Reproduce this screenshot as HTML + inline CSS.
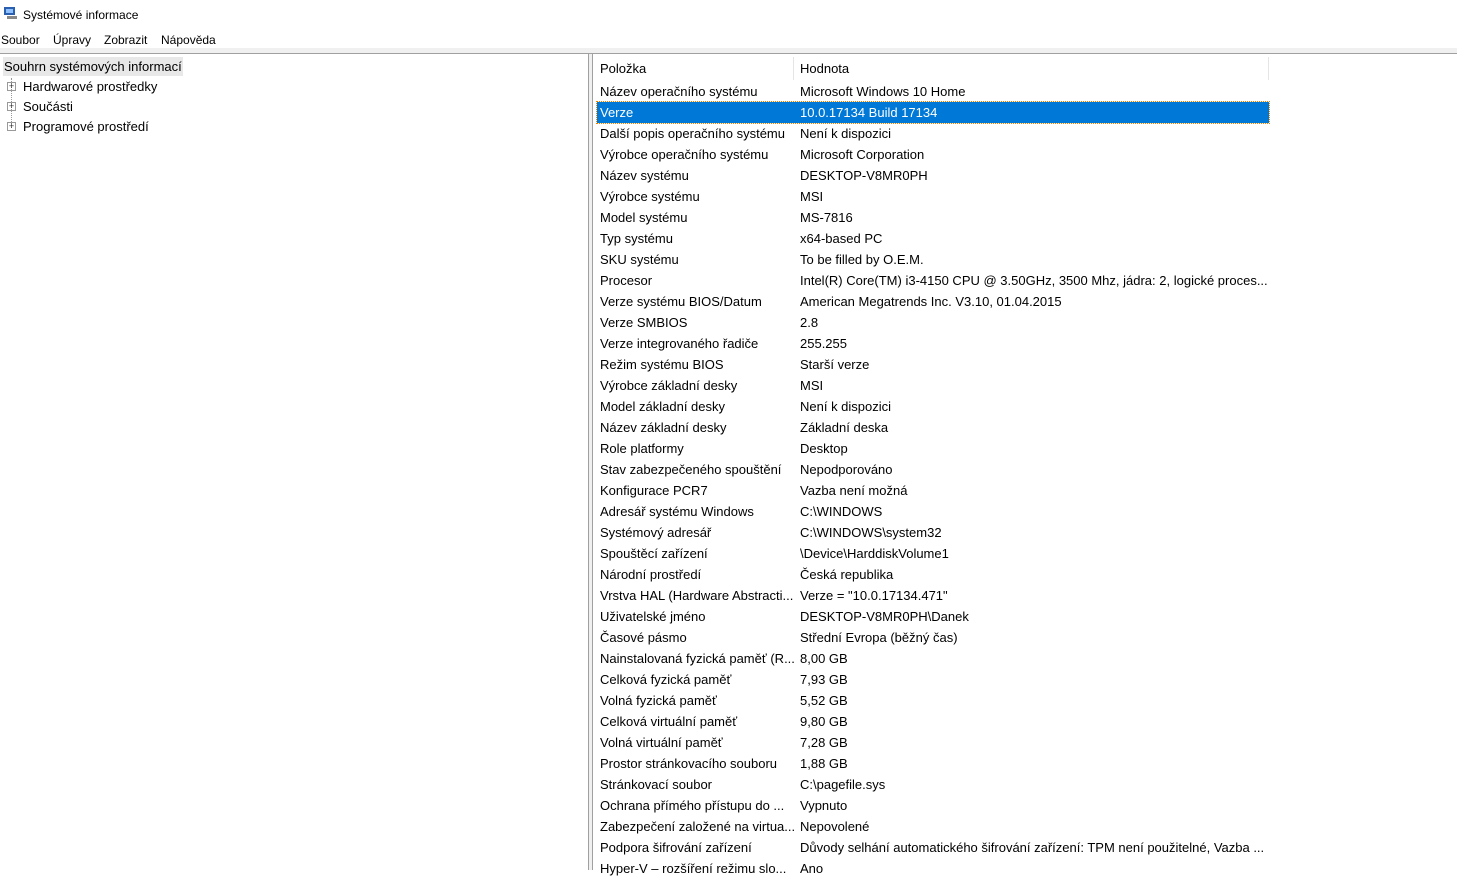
<!DOCTYPE html>
<html><head><meta charset="utf-8"><style>
*{margin:0;padding:0;box-sizing:border-box}
body{width:1457px;height:870px;overflow:hidden;background:#fff;font-family:"Liberation Sans",sans-serif;font-size:13px;color:#000;position:relative}
.abs{position:absolute;white-space:nowrap}
#title{left:23px;top:8px;font-size:12px}
.m{position:absolute;top:33px;font-size:12px;white-space:nowrap}
#band{left:0;top:48px;width:1457px;height:6px;background:#f0f0f0;border-bottom:1px solid #a0a0a0}
#lp{left:0;top:54px;width:589px;height:816px;border-right:1px solid #a0a0a0}
#gap{left:589px;top:54px;width:3px;height:816px;background:#f0f0f0}
#rp{left:592px;top:54px;width:865px;height:816px;border-left:1px solid #a0a0a0}
.tree{left:3px;font-size:13px}
.pl{position:absolute;width:9px;height:9px;border:1px solid #999;left:7px;font-size:9px;line-height:7px;text-align:center;color:#333}
.row{position:absolute;left:597px;width:672px;height:21px;line-height:21px}
.row span{position:absolute;left:3px}
.row b{font-weight:normal;position:absolute;left:203px}
.sel{background:#0078d7;color:#fff;outline:1px dotted #f08000}
</style></head><body>
<svg class="abs" style="left:3px;top:6px" width="16" height="14"><rect x="1" y="1" width="11" height="8" fill="#2a5fb0"/><rect x="3" y="3" width="7" height="4" fill="#8fc0ff"/><rect x="4" y="10" width="10" height="3" fill="#888"/></svg>
<div class="abs" id="title">Systémové informace</div>
<div class="m" style="left:1px">Soubor</div><div class="m" style="left:53px">Úpravy</div><div class="m" style="left:104px">Zobrazit</div><div class="m" style="left:161px">Nápověda</div>
<div class="abs" id="band"></div>
<div class="abs" id="lp"></div>
<div class="abs" id="gap"></div>
<div class="abs" id="rp"></div>
<div class="abs" style="left:3px;top:57px;width:180px;height:19px;background:#e8e8e8"></div>
<div class="abs tree" style="left:4px;top:59px">Souhrn systémových informací</div>
<div class="abs" style="left:11px;top:78px;height:50px;border-left:1px dotted #999"></div>
<div class="pl" style="top:82px">+</div><div class="abs tree" style="left:23px;top:79px">Hardwarové prostředky</div>
<div class="pl" style="top:102px">+</div><div class="abs tree" style="left:23px;top:99px">Součásti</div>
<div class="pl" style="top:122px">+</div><div class="abs tree" style="left:23px;top:119px">Programové prostředí</div>
<div class="row" style="top:57px;height:23px;line-height:23px"><span>Položka</span><b>Hodnota</b></div>
<div class="abs" style="left:793px;top:57px;width:1px;height:23px;background:#e5e5e5"></div>
<div class="abs" style="left:1268px;top:57px;width:1px;height:23px;background:#e5e5e5"></div>
<div id="rows"></div>
<script>
var d=[["Název operačního systému","Microsoft Windows 10 Home"],["Verze","10.0.17134 Build 17134"],["Další popis operačního systému","Není k dispozici"],["Výrobce operačního systému","Microsoft Corporation"],["Název systému","DESKTOP-V8MR0PH"],["Výrobce systému","MSI"],["Model systému","MS-7816"],["Typ systému","x64-based PC"],["SKU systému","To be filled by O.E.M."],["Procesor","Intel(R) Core(TM) i3-4150 CPU @ 3.50GHz, 3500 Mhz, jádra: 2, logické proces..."],["Verze systému BIOS/Datum","American Megatrends Inc. V3.10, 01.04.2015"],["Verze SMBIOS","2.8"],["Verze integrovaného řadiče","255.255"],["Režim systému BIOS","Starší verze"],["Výrobce základní desky","MSI"],["Model základní desky","Není k dispozici"],["Název základní desky","Základní deska"],["Role platformy","Desktop"],["Stav zabezpečeného spouštění","Nepodporováno"],["Konfigurace PCR7","Vazba není možná"],["Adresář systému Windows","C:\\WINDOWS"],["Systémový adresář","C:\\WINDOWS\\system32"],["Spouštěcí zařízení","\\Device\\HarddiskVolume1"],["Národní prostředí","Česká republika"],["Vrstva HAL (Hardware Abstracti...","Verze = \"10.0.17134.471\""],["Uživatelské jméno","DESKTOP-V8MR0PH\\Danek"],["Časové pásmo","Střední Evropa (běžný čas)"],["Nainstalovaná fyzická paměť (R...","8,00 GB"],["Celková fyzická paměť","7,93 GB"],["Volná fyzická paměť","5,52 GB"],["Celková virtuální paměť","9,80 GB"],["Volná virtuální paměť","7,28 GB"],["Prostor stránkovacího souboru","1,88 GB"],["Stránkovací soubor","C:\\pagefile.sys"],["Ochrana přímého přístupu do ...","Vypnuto"],["Zabezpečení založené na virtua...","Nepovolené"],["Podpora šifrování zařízení","Důvody selhání automatického šifrování zařízení: TPM není použitelné, Vazba ..."],["Hyper-V – rozšíření režimu slo...","Ano"]];
var h="";d.forEach(function(r,i){h+='<div class="row'+(i==1?' sel':'')+'" style="top:'+(81+i*21)+'px"><span></span><b></b></div>';});
var c=document.getElementById("rows");c.innerHTML=h;
c.querySelectorAll(".row").forEach(function(e,i){e.children[0].textContent=d[i][0];e.children[1].textContent=d[i][1];});
</script>
</body></html>
